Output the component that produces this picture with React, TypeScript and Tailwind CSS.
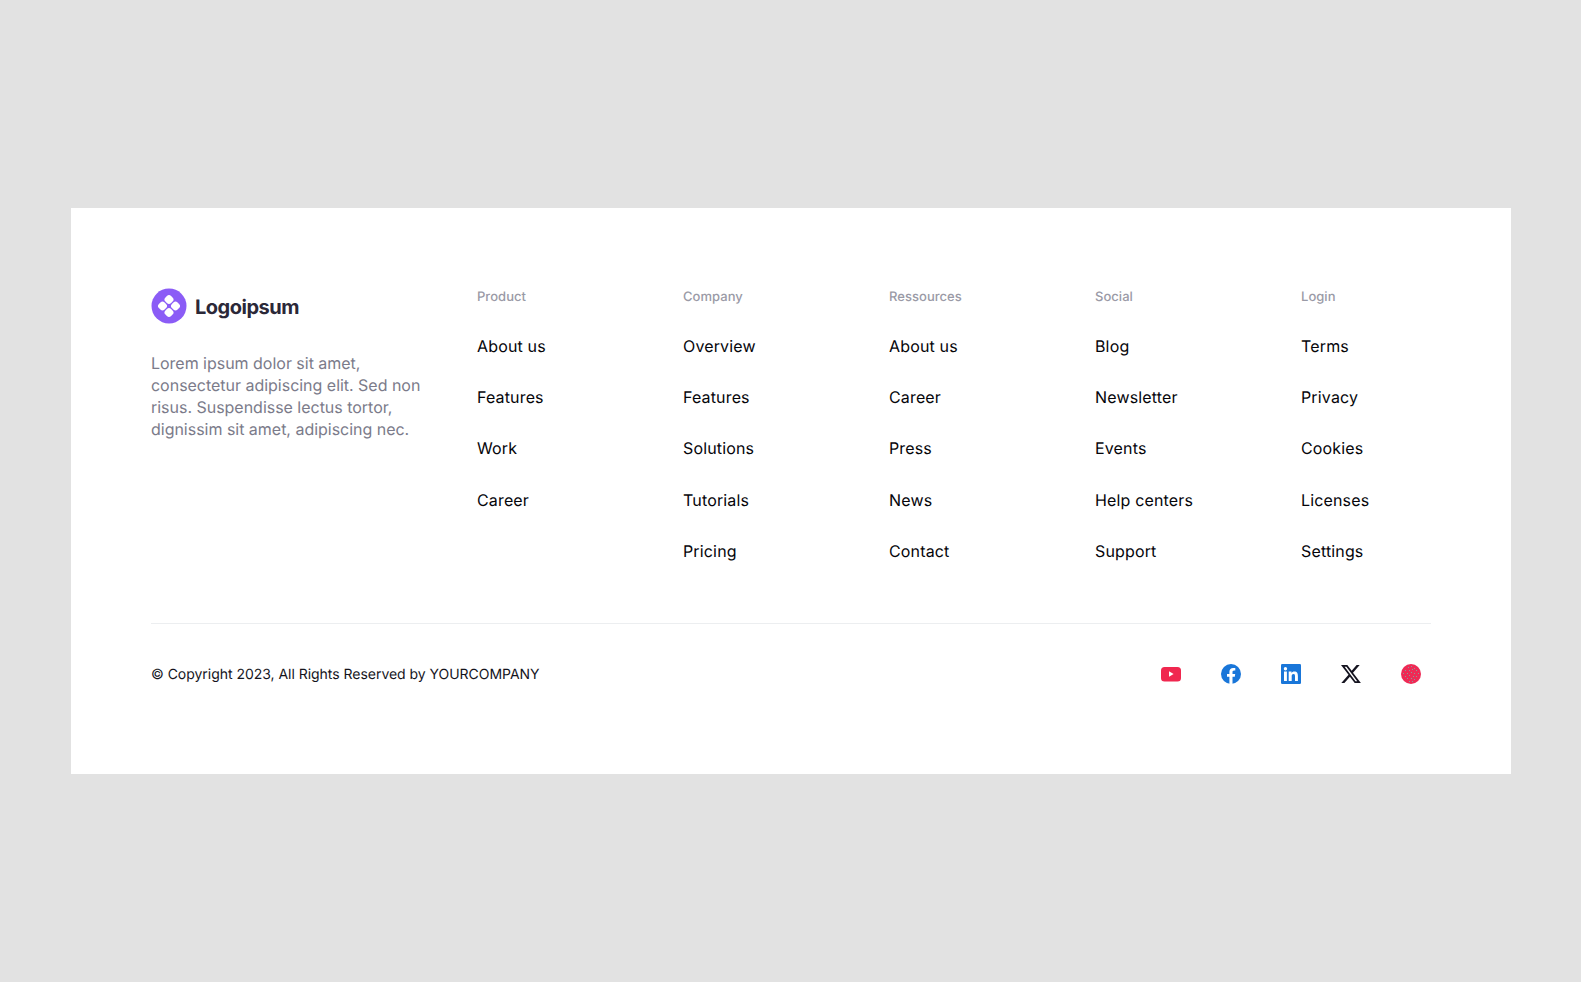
const columns = [
  { title: 'Product', links: ['About us', 'Features', 'Work', 'Career'] },
  { title: 'Company', links: ['Overview', 'Features', 'Solutions', 'Tutorials', 'Pricing'] },
  { title: 'Ressources', links: ['About us', 'Career', 'Press', 'News', 'Contact'] },
  { title: 'Social', links: ['Blog', 'Newsletter', 'Events', 'Help centers', 'Support'] },
  { title: 'Login', links: ['Terms', 'Privacy', 'Cookies', 'Licenses', 'Settings'] },
];

// dots scattered over the dribbble-like circle
const dots = [
  [7, 3], [10, 2], [13, 4], [4, 6], [8, 6], [11, 5], [15, 6], [2, 9], [6, 9], [10, 8], [13, 9],
  [17, 9], [4, 12], [8, 11], [12, 12], [15, 12], [6, 14], [10, 14], [13, 15], [8, 17], [11, 17],
];

function Logo() {
  return (
    <svg width="36" height="36" viewBox="0 0 36 36" fill="none">
      <circle cx="18" cy="18" r="17.5" fill="#8b5cf6" />
      <rect x="14" y="7.5" width="8" height="8" rx="3" transform="rotate(45 18 11.5)" fill="#fff" />
      <rect x="14" y="20.5" width="8" height="8" rx="3" transform="rotate(45 18 24.5)" fill="#fff" />
      <rect x="7.5" y="14" width="8" height="8" rx="3" transform="rotate(45 11.5 18)" fill="#fff" />
      <rect x="20.5" y="14" width="8" height="8" rx="3" transform="rotate(45 24.5 18)" fill="#fff" />
    </svg>
  );
}

function SocialIcons() {
  return (
    <div className="flex items-center gap-10">
      <svg width="20" height="20" viewBox="0 0 20 20">
        <rect x="0" y="3" width="20" height="14.5" rx="3.5" fill="#f0274f" />
        <path d="M8 7.3v5.4l4.6-2.7z" fill="#fff" />
      </svg>
      <svg width="20" height="20" viewBox="0 0 20 20">
        <circle cx="10" cy="10" r="10" fill="#1976d9" />
        <path d="M8.4 20v-7.2H6v-2.9h2.4V7.8c0-2.5 1.5-3.9 3.7-3.9 1.1 0 2.2.2 2.2.2v2.4h-1.2c-1.2 0-1.6.8-1.6 1.6v1.8h2.7l-.4 2.9h-2.3V20z" fill="#fff" />
      </svg>
      <svg width="20" height="20" viewBox="0 0 20 20">
        <rect width="20" height="20" rx="1.2" fill="#1976d9" />
        <path d="M3 7.6h2.9V17H3zM4.45 3a1.7 1.7 0 1 1 0 3.4 1.7 1.7 0 0 1 0-3.4zM7.7 7.6h2.8v1.3c.4-.8 1.4-1.5 2.8-1.5 3 0 3.6 2 3.6 4.5V17H14v-4.6c0-1.1 0-2.5-1.5-2.5s-1.8 1.2-1.8 2.4V17h-3z" fill="#fff" />
      </svg>
      <svg width="20" height="20" viewBox="0 0 20 20">
        <path d="M15.6 1h3.1l-6.7 7.7L19.9 19h-6.2l-4.8-6.3L3.4 19H.3l7.2-8.2L0 1h6.3l4.4 5.8zm-1.1 16.2h1.7L5.4 2.7H3.6z" fill="#14131f" />
      </svg>
      <svg width="20" height="20" viewBox="0 0 20 20">
        <circle cx="10" cy="10" r="10" fill="#ee2a55" />
        {dots.map(([x, y]) => (
          <rect key={`${x}-${y}`} x={x} y={y} width="1" height="1" fill="#8a9a9c" shapeRendering="crispEdges" />
        ))}
      </svg>
    </div>
  );
}

export default function App() {
  return (
    <div className="min-h-[982px] bg-[#e2e2e2] pt-[208px] pl-[71px] font-['Inter',sans-serif] [text-rendering:geometricPrecision]">
      <footer className="h-[566px] w-[1440px] bg-white px-20 pt-[80px]">
        <div className="flex h-[336px] border-b border-[#eceef0]">
          <div className="w-[326px] shrink-0">
            <div className="flex items-center gap-2">
              <Logo />
              <span className="relative top-px text-[20px] leading-9 font-bold tracking-[-0.5px] text-[#2b2838]">Logoipsum</span>
            </div>
            <p className="mt-7 w-[280px] text-base leading-[22px] tracking-[-0.02px] text-[#7b7b8a]">
              Lorem ipsum dolor sit amet, consectetur adipiscing elit. Sed non risus. Suspendisse lectus tortor,
              dignissim sit amet, adipiscing nec.
            </p>
          </div>
          {columns.map((col) => (
            <div key={col.title} className="w-[206px] shrink-0 pt-px last:w-[130px]">
              <h3 className="text-[13px] leading-[16px] font-medium tracking-[0.03px] text-[#9a9aa6]">{col.title}</h3>
              <ul className="mt-[28.6px] flex flex-col gap-[27.4px]">
                {col.links.map((link) => (
                  <li key={link} className="text-base leading-6 font-normal tracking-[0.15px] text-[#05050a]">
                    {link}
                  </li>
                ))}
              </ul>
            </div>
          ))}
        </div>
        <div className="mt-[40px] flex h-5 items-center justify-between pr-[10px]">
          <p className="text-sm leading-[21px] tracking-[-0.03px] text-[#14141c]">© Copyright 2023, All Rights Reserved by YOURCOMPANY</p>
          <SocialIcons />
        </div>
      </footer>
    </div>
  );
}
